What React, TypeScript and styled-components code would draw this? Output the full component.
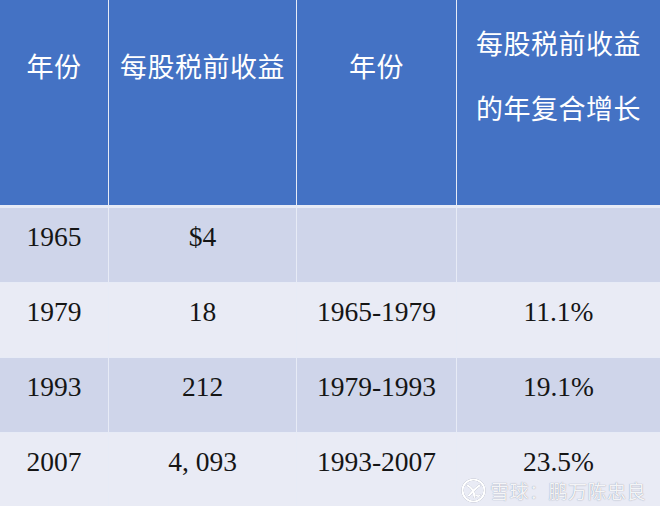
import React from "react";
import styled, { createGlobalStyle } from "styled-components";

const Global = createGlobalStyle`
  html, body { margin: 0; padding: 0; background: #e9ebf5; }
  #root { width: 660px; height: 506px; overflow: hidden; }
`;

const Page = styled.div`
  position: relative;
  width: 660px;
  height: 506px;
  background: #e7ebf6;
  display: flex;
  flex-direction: column;
  gap: 3px;
`;

const Grid = styled.div<{ $rows: string }>`
  display: grid;
  grid-template-columns: 108px 187px 159px 1fr;
  grid-template-rows: ${(p) => p.$rows};
  column-gap: 1px;
  row-gap: 1px;
`;

const HeadCell = styled.div<{ $top: number }>`
  background: #4472c4;
  color: #ffffff;
  font-family: "Noto Sans CJK SC", "Noto Sans", sans-serif;
  font-size: 27px;
  letter-spacing: 0.5px;
  line-height: 65px;
  text-align: center;
  padding-top: ${(p) => p.$top}px;
  box-sizing: border-box;
  display: flex;
  flex-direction: column;
  align-items: center;
`;

const BodyCell = styled.div<{ $alt: boolean }>`
  background: ${(p) => (p.$alt ? "#e9ebf5" : "#cfd5ea")};
  color: #151515;
  font-family: "Liberation Serif", "Noto Sans CJK SC", serif;
  font-size: 27.5px;
  line-height: 25px;
  text-align: center;
  padding-top: 16px;
  box-sizing: border-box;
`;

const Watermark = styled.div`
  position: absolute;
  left: 461px;
  top: 478px;
  display: flex;
  align-items: center;
  gap: 4px;
  color: rgba(255, 255, 255, 0.92);
  font-family: "Noto Sans CJK SC", sans-serif;
  font-size: 19px;
  line-height: 20px;
  letter-spacing: 0.5px;
  text-shadow: 0 0 1px rgba(80, 90, 120, 0.7);
`;

const Logo = () => (
  <svg width="25" height="25" viewBox="0 0 25 25" style={{ filter: "drop-shadow(0 0 0.7px rgba(80,90,120,0.7))" }}>
    <circle cx="12.5" cy="12.5" r="11" fill="none" stroke="#ffffff" strokeWidth="2.2" />
    <path d="M6.5 7.5 C10 9, 13 13, 13.5 19" fill="none" stroke="#ffffff" strokeWidth="2.2" strokeLinecap="round" />
    <path d="M18.5 7.5 C15 10, 11.5 13.5, 8 17.5" fill="none" stroke="#ffffff" strokeWidth="2.2" strokeLinecap="round" />
    <path d="M15 17 C16.5 18.5, 18 18.5, 19 17" fill="none" stroke="#ffffff" strokeWidth="1.8" strokeLinecap="round" />
  </svg>
);

const rows: string[][] = [
  ["1965", "$4", "", ""],
  ["1979", "18", "1965-1979", "11.1%"],
  ["1993", "212", "1979-1993", "19.1%"],
  ["2007", "4, 093", "1993-2007", "23.5%"],
];

export default function App() {
  return (
    <>
      <Global />
      <Page>
        <Grid $rows="205px">
          <HeadCell $top={33}>年份</HeadCell>
          <HeadCell $top={33}>每股税前收益</HeadCell>
          <HeadCell $top={33}>年份</HeadCell>
          <HeadCell $top={10}>
            <span>每股税前收益</span>
            <span>的年复合增长</span>
          </HeadCell>
        </Grid>
        <Grid $rows="74px 74px 74px 1fr" style={{ flex: 1 }}>
          {rows.map((r, i) =>
            r.map((c, j) => (
              <BodyCell key={`${i}-${j}`} $alt={i % 2 === 1}>
                {c}
              </BodyCell>
            ))
          )}
        </Grid>
        <Watermark>
          <Logo />
          <span>雪球：鹏万陈忠良</span>
        </Watermark>
      </Page>
    </>
  );
}
